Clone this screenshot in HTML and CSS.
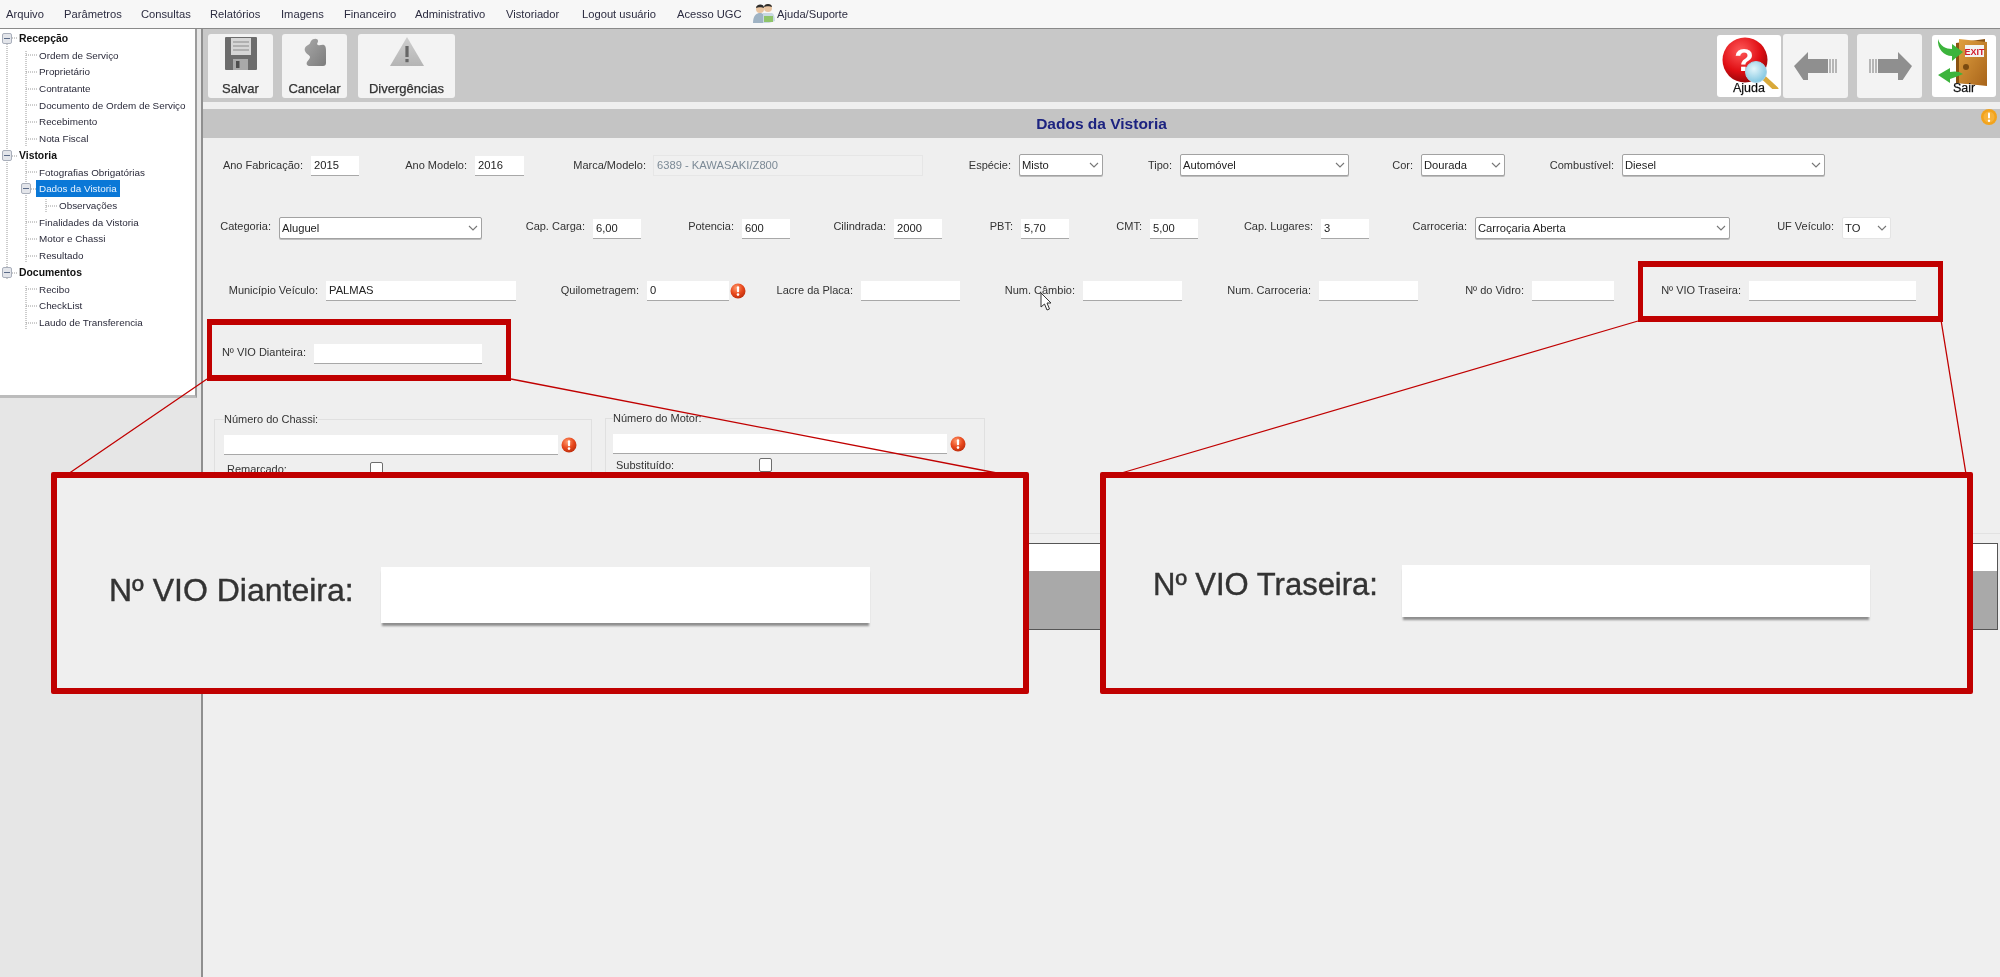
FILE: index.html
```html
<!DOCTYPE html>
<html lang="pt-BR">
<head>
<meta charset="utf-8">
<title>Dados da Vistoria</title>
<link rel="stylesheet" href="styles.css">
</head>
<body>
<svg class="defs" width="0" height="0" aria-hidden="true">
  <defs>
    <radialGradient id="gErr" cx="40%" cy="30%" r="75%"><stop offset="0" stop-color="#ff9b6e"/><stop offset=".55" stop-color="#e8481c"/><stop offset="1" stop-color="#b92c0c"/></radialGradient>
    <radialGradient id="gHelp" cx="40%" cy="30%" r="75%"><stop offset="0" stop-color="#ff5a5a"/><stop offset=".6" stop-color="#e00f14"/><stop offset="1" stop-color="#8e0508"/></radialGradient>
    <radialGradient id="gLens" cx="40%" cy="35%" r="70%"><stop offset="0" stop-color="#e4f6fb"/><stop offset="1" stop-color="#7cc4e0"/></radialGradient>
    <linearGradient id="gDoor" x1="0" x2="1" y1="0" y2="1"><stop offset="0" stop-color="#e0a040"/><stop offset="1" stop-color="#a8641a"/></linearGradient>
    <linearGradient id="gTri" x1="0" x2="0" y1="0" y2="1"><stop offset="0" stop-color="#cfcfcf"/><stop offset="1" stop-color="#b4b4b4"/></linearGradient>
    <linearGradient id="gPuz" x1="0" x2="1" y1="0" y2="1"><stop offset="0" stop-color="#a8a8a8"/><stop offset="1" stop-color="#7c7c7c"/></linearGradient>
    <symbol id="err" viewBox="0 0 16 16"><circle cx="8" cy="8" r="7.5" fill="url(#gErr)"/><rect x="6.9" y="3.2" width="2.2" height="6" rx="1" fill="#fff"/><circle cx="8" cy="11.6" r="1.3" fill="#fff"/></symbol>
    <symbol id="chev" viewBox="0 0 10 6"><path d="M1 1l4 4 4-4" fill="none" stroke="#777" stroke-width="1.1"/></symbol>
  </defs>
</svg>

<div class="app">
  <nav class="menubar">
    <span>Arquivo</span><span>Parâmetros</span><span>Consultas</span><span>Relatórios</span><span>Imagens</span><span>Financeiro</span><span>Administrativo</span><span>Vistoriador</span><span>Logout usuário</span><span>Acesso UGC</span>
    <span class="menu-help">
      <svg class="users-icon" viewBox="0 0 22 21"><circle cx="7" cy="6" r="4" fill="#e9c4a0"/><path d="M3 5c0-4 8-5 8 0-2-1-6-1-8 0z" fill="#2b2b2b"/><circle cx="15" cy="5" r="4" fill="#e9c4a0"/><path d="M11 4c0-4 8-4 8 0-2-1-6-1-8 0z" fill="#2b2b2b"/><path d="M0 20c0-8 4-10 7-10s6 2 6 10z" fill="#9fb3c4"/><path d="M10 10h9c2 1 3 4 3 8l-6 2h-6z" fill="#c9d8e2"/><rect x="11" y="13" width="9" height="6" fill="#8fc46a"/></svg>
      Ajuda/Suporte
    </span>
  </nav>

  <div class="main">
    <aside class="sidebar">
      <div class="tree">
        <svg class="tree-lines" viewBox="0 0 197 366" aria-hidden="true">
          <g fill="none" stroke="#9a9a9a" stroke-dasharray="1 1">
            <path d="M7 15V250M26 22V117M26 132V234M26 257V301M46 170V183M12 9h6M12 127h6M12 244h6M26 26h11M26 43h11M26 60h11M26 76h11M26 93h11M26 110h11M26 143h11M31 160h5M26 193h11M26 210h11M26 227h11M26 260h11M26 277h11M26 294h11M46 177h11"/>
          </g>
        </svg>
        <ul class="tree-list">
          <li class="node root"><i class="exp"></i>Recepção</li>
          <li class="node leaf">Ordem de Serviço</li>
          <li class="node leaf">Proprietário</li>
          <li class="node leaf">Contratante</li>
          <li class="node leaf">Documento de Ordem de Serviço</li>
          <li class="node leaf">Recebimento</li>
          <li class="node leaf">Nota Fiscal</li>
          <li class="node root"><i class="exp"></i>Vistoria</li>
          <li class="node leaf">Fotografias Obrigatórias</li>
          <li class="node leaf open"><i class="exp"></i><span class="selected">Dados da Vistoria</span></li>
          <li class="node sub">Observações</li>
          <li class="node leaf">Finalidades da Vistoria</li>
          <li class="node leaf">Motor e Chassi</li>
          <li class="node leaf">Resultado</li>
          <li class="node root"><i class="exp"></i>Documentos</li>
          <li class="node leaf">Recibo</li>
          <li class="node leaf">CheckList</li>
          <li class="node leaf">Laudo de Transferencia</li>
        </ul>
      </div>
    </aside>

    <section class="workspace">
      <div class="toolbar">
        <button class="tool tool-save"><svg class="ic-save" viewBox="0 0 32 33"><path d="M1 0h30a1 1 0 0 1 1 1v31a1 1 0 0 1-1 1H1a1 1 0 0 1-1-1V1a1 1 0 0 1 1-1z" fill="#6c6c6c"/><rect x="6" y="1" width="20" height="17" fill="#d6d6d6"/><path d="M8 5h16M8 9h16M8 13h16" stroke="#8a8a8a"/><rect x="8" y="22" width="15" height="11" fill="#a9a9a9"/><rect x="11" y="24" width="3.5" height="7" fill="#4e4e4e"/></svg><span>Salvar</span></button>
        <button class="tool tool-cancel"><svg class="ic-cancel" viewBox="0 0 22 28"><path d="M7 3c2-3 7-3 7 0 0 2-2 3 0 4 2 1 4-1 6 0 2 1 2 4 2 7v11c0 2-1 3-3 3H6c-3 0-4-2-3-4 1-2 3-3 3-5s-4-3-5-6 1-5 3-6 2-2 3-4z" fill="url(#gPuz)"/></svg><span>Cancelar</span></button>
        <button class="tool tool-div"><svg class="ic-warn" viewBox="0 0 34 29"><path d="M17 0l17 29H0z" fill="url(#gTri)"/><rect x="15.4" y="9" width="3.2" height="11" fill="#666"/><rect x="15.4" y="22" width="3.2" height="3.2" fill="#666"/></svg><span>Divergências</span></button>
        <div class="tool-spacer"></div>
        <button class="tool tool-white"><svg class="ic-help" viewBox="0 0 60 52"><circle cx="26" cy="23" r="22.500" fill="url(#gHelp)"/><text x="25" y="34" class="q-mark">?</text><path d="M44 40l13 12" stroke="#d9a93a" stroke-width="5" stroke-linecap="round"/><circle cx="37" cy="35" r="10.500" fill="url(#gLens)" stroke="#a9d3e6"/></svg><span class="over">Ajuda</span></button>
        <button class="tool tool-nav"><svg class="ic-arrow" viewBox="0 0 44 28"><path d="M0 14L14 0v7h20v14H14v14z" fill="#8f8f8f"/><path d="M36 7v14M39 7v14M42 7v14" stroke="#a2a2a2" stroke-width="1.5"/></svg></button>
        <button class="tool tool-nav"><svg class="ic-arrow" viewBox="0 0 44 28"><path d="M44 14L30 0v7H10v14h20v14z" fill="#8f8f8f"/><path d="M8 7v14M5 7v14M2 7v14" stroke="#a2a2a2" stroke-width="1.5"/></svg></button>
        <button class="tool tool-white"><svg class="ic-exit" viewBox="0 0 58 52"><path d="M21 6L50 2v46L21 46z" fill="#8a5212"/><path d="M24 2l28 3v44l-28-3z" fill="url(#gDoor)"/><rect x="30" y="8" width="19" height="12" fill="#f3f3f3"/><text x="39.500" y="18" class="exit-mark">EXIT</text><circle cx="31" cy="30" r="3" fill="#7a4a10"/><path d="M3 2c2 7 8 10 14 10V7l11 8-11 9v-5C9 19 2 12 3 2z" fill="#3cb43c"/><path d="M28 37c-4-3-9-3-13-2v-4L3 38l12 8v-4c5-2 9-3 13-5z" fill="#3cb43c"/></svg><span class="over">Sair</span></button>
      </div>

      <header class="titlebar">
        <h1>Dados da Vistoria</h1>
        <svg class="badge-warn" viewBox="0 0 16 16"><circle cx="8" cy="8" r="8" fill="#f2a31c"/><circle cx="8" cy="8" r="5.500" fill="#f7b23a"/><rect x="7" y="3.400" width="2" height="6" rx="1" fill="#fff"/><circle cx="8" cy="11.800" r="1.200" fill="#fff"/></svg>
      </header>

      <div class="form">
        <div class="row row-1">
          <label>Ano Fabricação:</label><div class="field">2015</div>
          <label>Ano Modelo:</label><div class="field">2016</div>
          <label>Marca/Modelo:</label><div class="field readonly">6389 - KAWASAKI/Z800</div>
          <label>Espécie:</label><div class="combo">Misto<svg class="chev"><use href="#chev"/></svg></div>
          <label>Tipo:</label><div class="combo">Automóvel<svg class="chev"><use href="#chev"/></svg></div>
          <label>Cor:</label><div class="combo">Dourada<svg class="chev"><use href="#chev"/></svg></div>
          <label>Combustível:</label><div class="combo">Diesel<svg class="chev"><use href="#chev"/></svg></div>
        </div>
        <div class="row row-2">
          <label>Categoria:</label><div class="combo">Aluguel<svg class="chev"><use href="#chev"/></svg></div>
          <label>Cap. Carga:</label><div class="field">6,00</div>
          <label>Potencia:</label><div class="field">600</div>
          <label>Cilindrada:</label><div class="field">2000</div>
          <label>PBT:</label><div class="field">5,70</div>
          <label>CMT:</label><div class="field">5,00</div>
          <label>Cap. Lugares:</label><div class="field">3</div>
          <label>Carroceria:</label><div class="combo">Carroçaria Aberta<svg class="chev"><use href="#chev"/></svg></div>
          <label>UF Veículo:</label><div class="combo combo-flat">TO<svg class="chev"><use href="#chev"/></svg></div>
        </div>
        <div class="row row-3">
          <label>Município Veículo:</label><div class="field">PALMAS</div>
          <label>Quilometragem:</label><div class="field">0</div><svg class="err"><use href="#err"/></svg>
          <label>Lacre da Placa:</label><div class="field"></div>
          <label>Num. Câmbio:</label><div class="field"></div>
          <label>Num. Carroceria:</label><div class="field"></div>
          <label>Nº do Vidro:</label><div class="field"></div>
          <label>Nº VIO Traseira:</label><div class="field"></div>
        </div>
        <div class="row row-4">
          <label>Nº VIO Dianteira:</label><div class="field"></div>
        </div>

        <div class="groups">
          <fieldset class="group group-chassi">
            <legend>Número do Chassi:</legend>
            <div class="group-input"><div class="field"></div><svg class="err"><use href="#err"/></svg></div>
            <div class="check-row"><label>Remarcado:</label><i class="check"></i></div>
          </fieldset>
          <fieldset class="group group-motor">
            <legend>Número do Motor:</legend>
            <div class="group-input"><div class="field"></div><svg class="err"><use href="#err"/></svg></div>
            <div class="check-row"><label>Substituído:</label><i class="check"></i></div>
          </fieldset>
        </div>

        <div class="datagrid">
          <div class="datagrid-head"></div>
          <div class="datagrid-body"></div>
        </div>
      </div>
    </section>
  </div>

  <svg class="cursor" viewBox="0 0 13 19"><path d="M1 1v14l3.500-3 2.500 6 2.500-1-2.500-6H11z" fill="#fff" stroke="#333"/></svg>

  <svg class="leaders" viewBox="0 0 2000 977" aria-hidden="true">
    <path d="M207 379L68 474M511 379L1002 474M1638 321L1118 474M1941 320L1966 474" fill="none" stroke="#c00000" stroke-width="1.3"/>
  </svg>
  <div class="mark mark-rear"></div>
  <div class="mark mark-front"></div>
  <div class="callout callout-front">
    <span class="callout-label">Nº VIO Dianteira:</span>
    <div class="callout-input"></div>
  </div>
  <div class="callout callout-rear">
    <span class="callout-label">Nº VIO Traseira:</span>
    <div class="callout-input"></div>
  </div>
</div>
</body>
</html>
```

FILE: styles.css
```css
* { box-sizing: border-box; }
html, body { margin: 0; height: 100%; }
body { overflow: hidden; background: #efefef; font-family: "Liberation Sans", Arial, sans-serif; font-size: 11px; color: #333; }
.defs { position: absolute; }
.app { position: relative; width: 2000px; height: 977px; display: flex; flex-direction: column; filter: blur(.35px); }

/* menu */
.menubar { height: 29px; flex: none; display: grid; grid-template-columns: 58px 77px 69px 71px 63px 71px 91px 76px 95px 76px auto; justify-content: start; align-items: center; padding: 0 0 1px 6px; background: #f7f7f7; border-bottom: 1px solid #8a8a8a; font-size: 11.2px; color: #2c2c40; white-space: nowrap; }
.menu-help { display: flex; align-items: center; gap: 2px; }
.users-icon { width: 22px; height: 21px; }

/* layout */
.main { flex: 1; display: flex; min-height: 0; }
.sidebar { width: 203px; flex: none; background: #e6e6e6; border-right: 2px solid #8f8f8f; }
.tree { position: relative; width: 197px; height: 369px; padding-top: 1px; background: #fff; border-right: 2px solid #9c9c9c; border-bottom: 3px solid #bcbcbc; }
.tree-lines { position: absolute; left: 0; top: 0; width: 197px; height: 366px; }
.tree-list { position: relative; list-style: none; margin: 0; padding: 0; font-size: 9.9px; color: #2a2a3a; }
.node { display: flex; align-items: center; height: 16.72px; white-space: nowrap; }
.root { font-weight: 700; font-size: 10.4px; padding-left: 19px; color: #111; }
.leaf { padding-left: 39px; }
.sub { padding-left: 59px; }
.exp { position: absolute; left: 2px; width: 10px; height: 11px; background: #e3e5ea; border: 1px solid #a9afbb; border-radius: 2px; }
.exp::after { content: ""; position: absolute; left: 1px; right: 1px; top: 4px; height: 1px; background: #5b6b88; }
.open .exp { left: 21px; }
.selected { margin-left: -3px; padding: 0 3px; line-height: 17px; background: #0a78d7; color: #e8f3ff; }

.workspace { flex: 1; min-width: 0; display: flex; flex-direction: column; background: #efefef; }
.toolbar { height: 73px; flex: none; display: flex; align-items: center; padding: 0 4px 0 5px; background: #c8c8c8; }
.tool { height: 64px; width: 65px; flex: none; display: flex; flex-direction: column; align-items: center; padding: 3px 0 0; margin: 0; border: 0; border-radius: 3px; background: #f3f3f3; font: 13px "Liberation Sans", Arial, sans-serif; color: #333; -webkit-text-stroke: .25px #333; }
.tool > span { margin-top: auto; margin-bottom: 2px; }
.tool-cancel { margin-left: 9px; }
.tool-div { width: 97px; margin-left: 11px; }
.tool-spacer { flex: 1; }
.tool-white { height: 62px; width: 64px; background: #fff; color: #000; padding-top: 2px; }
.tool-nav { margin-left: 2px; justify-content: center; padding: 0; }
.tool-nav + .tool-nav { margin-left: 9px; }
.tool-nav + .tool-white { margin-left: 10px; }
.ic-save { width: 32px; height: 33px; }
.ic-cancel { width: 22px; height: 28px; margin-top: 1px; }
.ic-warn { width: 34px; height: 29px; }
.ic-help { width: 60px; height: 52px; }
.ic-exit { width: 58px; height: 52px; }
.ic-arrow { width: 44px; height: 28px; }
.q-mark { font: 700 32px "Liberation Sans", Arial, sans-serif; fill: #fff; text-anchor: middle; stroke: none; }
.exit-mark { font: 700 9px "Liberation Sans", Arial, sans-serif; fill: #d21a2a; text-anchor: middle; stroke: none; }
.tool .over { margin: -8px 0 0; font-size: 12.5px; position: relative; }

.titlebar { position: relative; height: 29px; flex: none; margin-top: 7px; display: flex; align-items: center; justify-content: center; background: #c4c4c4; }
.titlebar h1 { margin: 0; font-size: 15.5px; font-weight: 700; color: #1c2380; }
.badge-warn { position: absolute; right: 3px; top: 0; width: 16px; height: 16px; }

/* form */
.form { flex: 1; display: flex; flex-direction: column; }
.row { display: grid; align-items: center; height: 19px; }
.row label { justify-self: end; padding-right: 8px; white-space: nowrap; }
.row-1 { margin-top: 16px; height: 21px; grid-template-columns: 108px 48px 116px 49px 130px 268px 97px 84px 77px 169px 72px 84px 117px 203px; }
.row-2 { margin-top: 42px; height: 22px; grid-template-columns: 76px 203px 111px 48px 101px 48px 104px 48px 79px 48px 81px 48px 123px 48px 106px 255px 112px 49px; }
.row-2 label { margin-bottom: 4px; }
.row-3 { margin-top: 42px; grid-template-columns: 123px 190px 131px 82px 20px 112px 99px 123px 99px 137px 99px 114px 82px 135px 167px; }
.row-3 label { margin-bottom: 2px; }
.row-4 { margin-top: 44px; grid-template-columns: 111px 168px; }
.row-4 label { margin-bottom: 3px; }

.field { height: 19px; padding: 0 3px; background: #fff; font-size: 11.2px; line-height: 19px; color: #222; box-shadow: 0 1px 0 #a8a8a8; white-space: nowrap; }
.readonly { background: #f0f0f0; color: #7c8a96; box-shadow: 0 0 0 1px #e6e6e6; }
.combo { position: relative; height: 22px; padding: 0 2px; background: #fff; border: 1px solid #a2a2a2; border-radius: 2px; font-size: 11.2px; line-height: 20px; color: #222; white-space: nowrap; box-shadow: 0 1px 0 #bdbdbd; }
.combo-flat { border-color: #e4e4e4; box-shadow: none; }
.chev { position: absolute; right: 3px; top: 7px; width: 10px; height: 6px; }
.err { width: 16px; height: 16px; margin-left: 1px; }

.groups { display: flex; gap: 13px; height: 122px; margin-top: 49px; padding-left: 11px; border-bottom: 1px solid #e2e2e2; }
.group { width: 378px; margin: 0; padding: 0 9px; min-width: 0; height: 108px; border: 1px solid #e0e0e0; }
.group-motor { width: 380px; margin-top: -1px; padding-left: 7px; }
.group legend { padding: 0; height: 14px; line-height: 14px; }
.group-input { display: flex; align-items: center; margin-top: 9px; }
.group-input .field { flex: 1; }
.group-input .err { margin-left: 3px; margin-right: 5px; }
.group-motor .group-input .err { margin-right: 9px; }
.check-row { display: flex; align-items: center; margin: 8px 0 0 3px; }
.group-motor .check-row { margin-top: 5px; }
.check-row label { width: 143px; }
.check { width: 13px; height: 14px; border: 1px solid #6e6e6e; border-radius: 2px; background: #fff; }

.datagrid { margin: 9px 2px 0 0; border: 1px solid #555; }
.datagrid-head { height: 27px; background: #fff; }
.datagrid-body { height: 58px; background: #a9a9a9; }

/* overlays */
.cursor { position: absolute; left: 1040px; top: 292px; width: 13px; height: 19px; }
.leaders { position: absolute; left: 0; top: 0; width: 2000px; height: 977px; pointer-events: none; }
.mark { position: absolute; border: 6px solid #c00000; border-left-width: 5px; border-right-width: 5px; }
.mark-rear { left: 1638px; top: 261px; width: 305px; height: 61px; }
.mark-front { left: 207px; top: 319px; width: 304px; height: 62px; }
.callout { position: absolute; top: 472px; height: 222px; display: flex; align-items: center; background: #efefef; border: 6px solid #c00000; border-radius: 2px; }
.callout-label { flex: none; font-size: 32px; color: #333; white-space: nowrap; -webkit-text-stroke: .4px #333; }
.callout-input { flex: none; background: #fff; box-shadow: 0 4px 2px -1px #8e8e8e; }
.callout-front { left: 51px; width: 978px; padding: 24px 0 0 52px; }
.callout-front .callout-label { width: 272px; margin-top: -10px; }
.callout-front .callout-input { width: 489px; height: 56px; }
.callout-rear { left: 1100px; width: 873px; padding: 16px 0 0 47px; }
.callout-rear .callout-label { width: 249px; margin-top: -12px; font-size: 31px; }
.callout-rear .callout-input { width: 468px; height: 52px; }
```
